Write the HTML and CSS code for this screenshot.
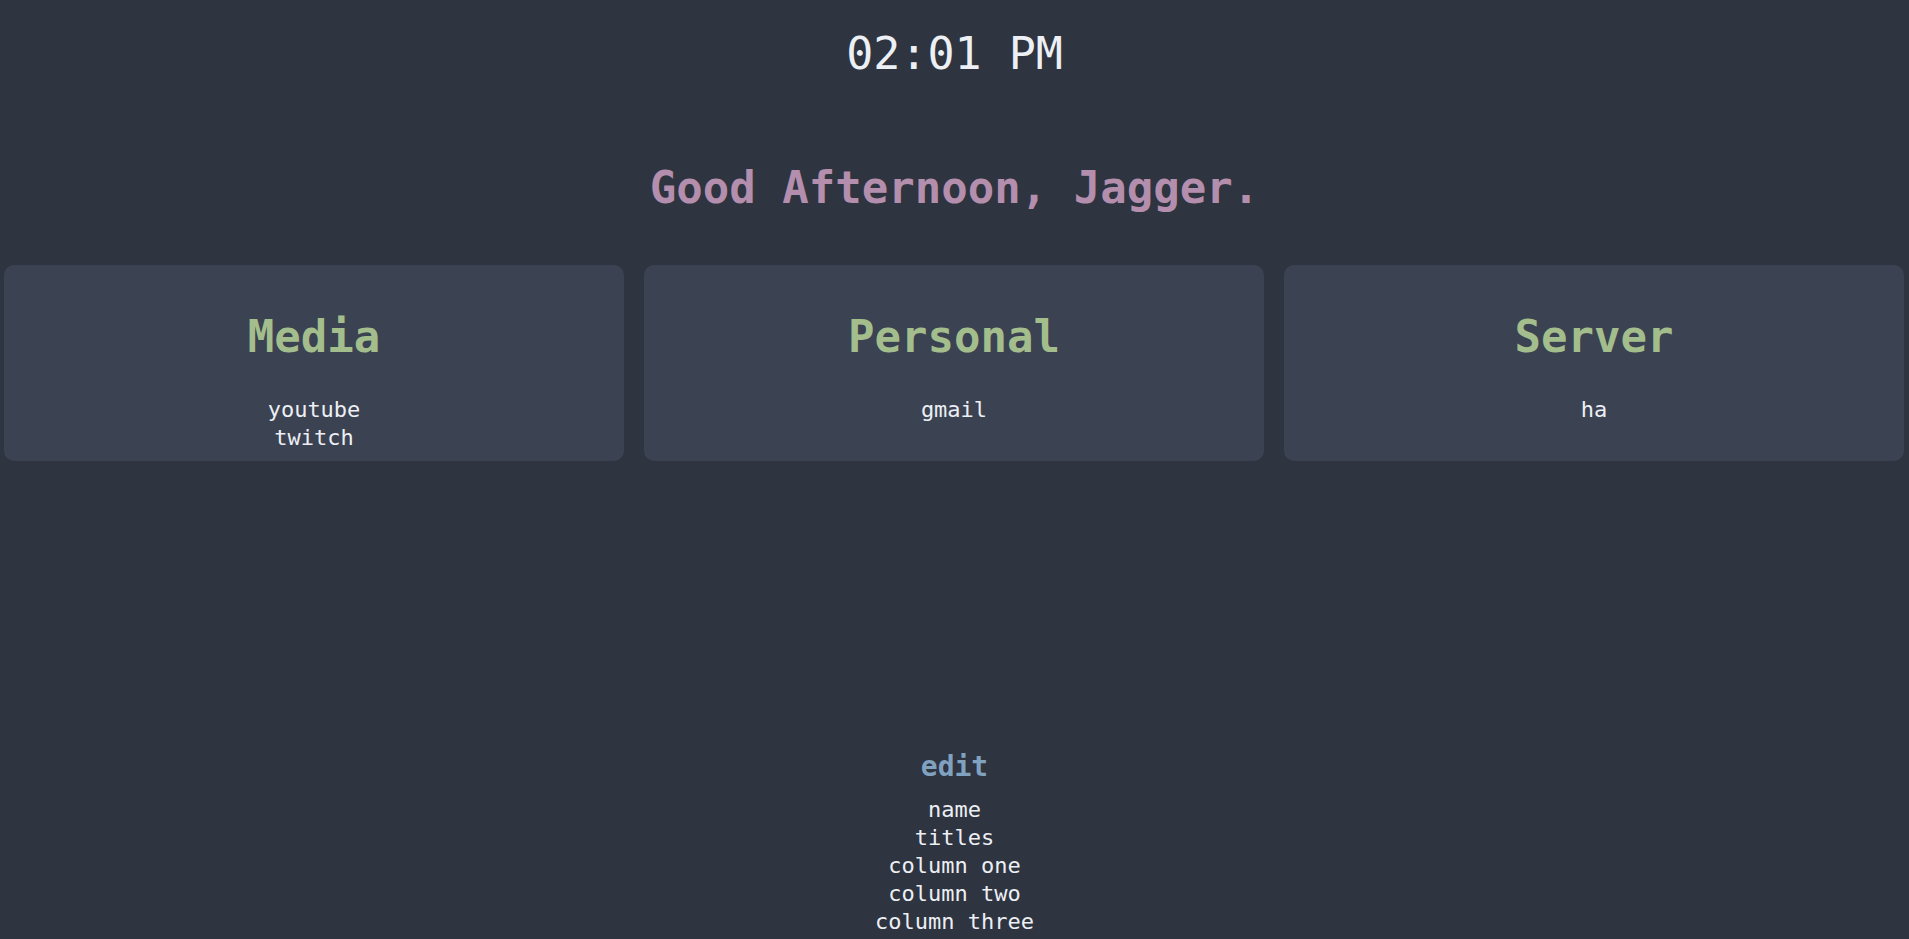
FILE: index.html
```html
<!DOCTYPE html>
<html lang="en">
<head>
<meta charset="utf-8">
<title>Start</title>
<link rel="stylesheet" href="styles.css">
</head>
<body>
<main class="page">
  <div class="clock">02:01 PM</div>
  <h1 class="greeting">Good Afternoon, Jagger.</h1>
  <section class="columns">
    <div class="card">
      <h2 class="card-title">Media</h2>
      <ul class="links">
        <li><a href="#">youtube</a></li>
        <li><a href="#">twitch</a></li>
      </ul>
    </div>
    <div class="card">
      <h2 class="card-title">Personal</h2>
      <ul class="links">
        <li><a href="#">gmail</a></li>
      </ul>
    </div>
    <div class="card">
      <h2 class="card-title">Server</h2>
      <ul class="links">
        <li><a href="#">ha</a></li>
      </ul>
    </div>
  </section>
  <section class="edit">
    <h3 class="edit-title">edit</h3>
    <ul class="links">
      <li><a href="#">name</a></li>
      <li><a href="#">titles</a></li>
      <li><a href="#">column one</a></li>
      <li><a href="#">column two</a></li>
      <li><a href="#">column three</a></li>
    </ul>
  </section>
</main>
</body>
</html>
```
FILE: styles.css
```css
html, body {
  margin: 0;
  padding: 0;
  background: #2e3440;
}

body {
  font-family: "DejaVu Sans Mono", "Liberation Mono", monospace;
  color: #eceff4;
}

.page {
  display: flex;
  flex-direction: column;
  align-items: stretch;
  text-align: center;
}

.clock {
  padding-top: 28px;
  font-size: 45px;
  line-height: 52px;
  color: #eceff4;
}

.greeting {
  margin: 82px 0 0;
  font-size: 44px;
  line-height: 51px;
  font-weight: bold;
  color: #b48ead;
}

.columns {
  display: flex;
  gap: 20px;
  padding: 0 5px 0 4px;
  margin-top: 52px;
}

.card {
  flex: 1;
  background: #3b4252;
  border-radius: 10px;
  padding: 46px 0 9px;
}

.card-title {
  margin: 0 0 33px;
  font-size: 44px;
  line-height: 52px;
  font-weight: bold;
  color: #a3be8c;
}

.links {
  list-style: none;
  margin: 0;
  padding: 0;
  font-size: 22px;
  line-height: 28px;
}

.links a {
  color: #eceff4;
  text-decoration: none;
}

.edit {
  margin-top: 290px;
}

.edit-title {
  margin: 0 0 13px;
  font-size: 28px;
  line-height: 32px;
  font-weight: bold;
  color: #81a1c1;
}
```
